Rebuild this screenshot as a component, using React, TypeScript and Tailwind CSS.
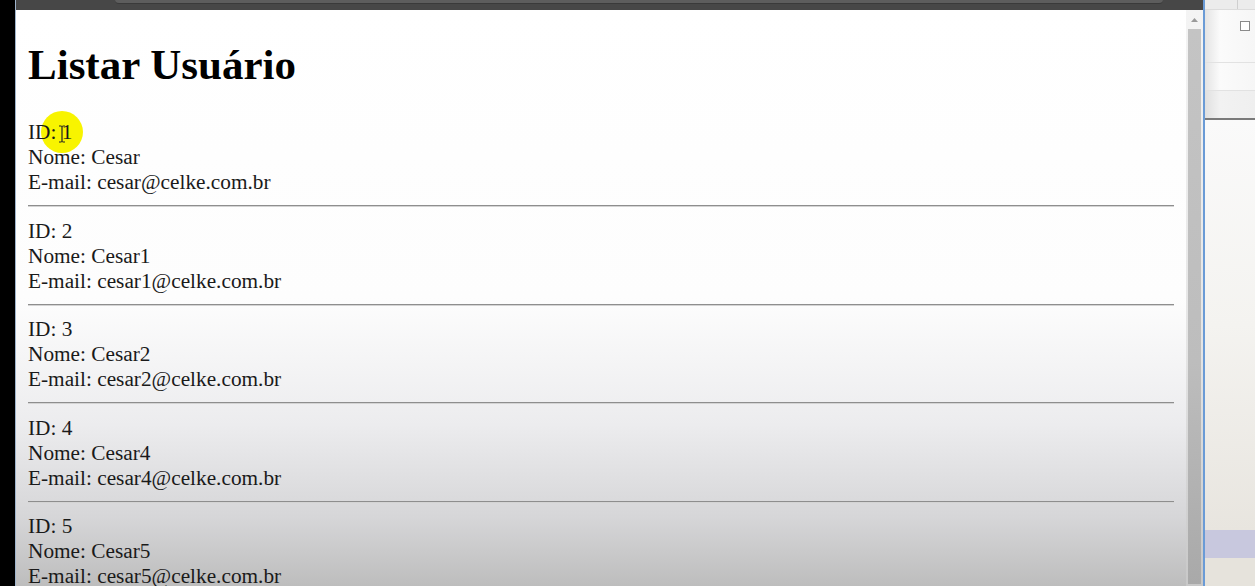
const users = [
  { id: 1, nome: "Cesar", email: "cesar@celke.com.br" },
  { id: 2, nome: "Cesar1", email: "cesar1@celke.com.br" },
  { id: 3, nome: "Cesar2", email: "cesar2@celke.com.br" },
  { id: 4, nome: "Cesar4", email: "cesar4@celke.com.br" },
  { id: 5, nome: "Cesar5", email: "cesar5@celke.com.br" },
];

const App = () => {
  return (
    <div className="flex h-[586px] w-[1255px] overflow-hidden bg-black">
      {/* left edge of the video frame */}
      <div className="w-[15px] shrink-0 bg-black" />
      <div className="w-px shrink-0 bg-[#9fb4cc]" />

      {/* browser window */}
      <div className="flex w-[1187px] shrink-0 flex-col">
        <div className="relative h-[10px] shrink-0 bg-[#474747]">
          <div className="absolute left-[99px] top-0 h-[4px] w-[1048px] rounded-b-sm border-b border-[#3a3a3a] bg-[#5d5d5d]" />
        </div>
        <div className="flex min-h-0 flex-1">
          <div className="flex-1 bg-[linear-gradient(to_bottom,#ffffff_0%,#fdfdfd_50%,#ececee_72%,#d6d6d8_88%,#bdbdbd_100%)] px-3 font-['Liberation_Serif',serif] text-[21.3px] leading-[25px] text-[#1a1a1a]">
            <h1 className="mt-[32px] mb-[32px] text-[43px] font-bold leading-[46px] text-black">
              Listar Usuário
            </h1>
            {users.map((u, i) => (
              <div key={u.id} className="relative">
                {i === 0 && (
                  <div className="absolute left-[13px] top-[-9px] flex h-[42px] w-[42px] items-center justify-center rounded-full bg-[#f8f400]">
                    <svg width="8" height="18" viewBox="0 0 8 18" className="ml-[-1px] mt-[4px]">
                      <path d="M1 1h2.5M4.5 1H7M4 1v16M1 17h2.5M4.5 17H7" stroke="#222" strokeWidth="1.2" fill="none" />
                    </svg>
                  </div>
                )}
                <div className="relative">ID: {u.id}</div>
                <div>Nome: {u.nome}</div>
                <div>E-mail: {u.email}</div>
                <hr className="mt-[10px] mb-[11.5px] h-0 border-t border-b border-t-[#8e8e8e] border-b-[#d4d4d4]" />
              </div>
            ))}
          </div>

          {/* scrollbar */}
          <div className="flex w-[17px] shrink-0 flex-col items-center bg-[linear-gradient(to_bottom,#f4f4f4,#e4e4e4_60%,#c8c8c8)] pb-[2px]">
            <svg width="9" height="6" viewBox="0 0 9 6" className="mt-[7px]">
              <path d="M4.5 1L8 5H1z" fill="#9a9a9a" />
            </svg>
            <div className="mt-[6px] w-[13px] flex-1 bg-[linear-gradient(to_bottom,#c4c4c4,#bdbdbd_60%,#a9a9a9)]" />
          </div>
        </div>
      </div>

      {/* divider */}
      <div className="w-[2px] shrink-0 bg-[#6a9bd6]" />

      {/* side panel of the editor */}
      <div className="flex flex-1 flex-col bg-[linear-gradient(to_right,#e4e4e4,#fbfbfb_30%,#f6f6f6)]">
        <div className="flex h-[10px] shrink-0 border-b border-[#dcdcdc] bg-[#ececec]">
          <div className="w-[33px] border-r border-[#cfcfcf]" />
        </div>
        <div className="h-[53px] shrink-0 border-b border-[#e2e2e2] pl-[35px] pt-[11px]">
          <div className="h-[10px] w-[10px] border border-[#8a8a8a] bg-white" />
        </div>
        <div className="h-[28px] shrink-0 border-b border-[#e2e2e2]" />
        <div className="h-[29px] shrink-0 border-b-2 border-[#7a7a7a] bg-[linear-gradient(to_right,#e0e0e0,#f2f2f2_30%,#efefef)]" />
        <div className="flex-1 bg-[linear-gradient(to_bottom,#fafafa,#f4f3f0_50%,#e8e5df)]" />
        <div className="h-[28px] shrink-0 bg-[#c8c8de]" />
        <div className="h-[28px] shrink-0 bg-[#e6e3dc]" />
      </div>
    </div>
  );
};

export default App;
